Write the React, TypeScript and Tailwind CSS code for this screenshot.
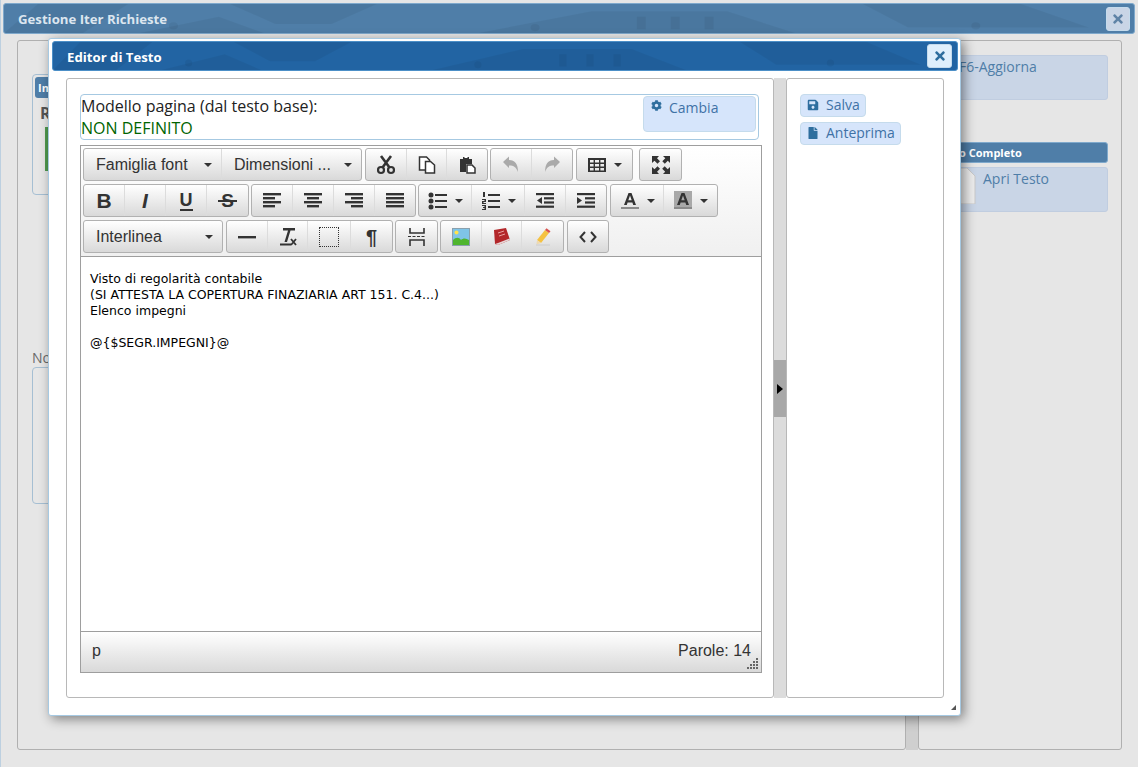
import type { ReactNode } from 'react';
import { FaCog, FaFile, FaSave, FaTimes } from 'react-icons/fa';

const sans = 'font-["Open_Sans",sans-serif]';

// texture of the jQuery-UI style title bars
function HeaderTexture() {
  return (
    <svg className="absolute inset-0 w-full h-full pointer-events-none" preserveAspectRatio="none" viewBox="0 0 1000 32">
      <g fill="#000" fillOpacity="0.05">
        <polygon points="30,0 110,0 70,32 0,32" />
        <polygon points="200,0 330,0 290,22 240,22" />
        <polygon points="420,32 520,8 640,8 700,32" />
        <polygon points="760,0 900,0 960,26 800,26" />
        <polygon points="120,32 190,14 230,32" />
        <rect x="560" y="14" width="8" height="14" />
        <rect x="590" y="14" width="8" height="14" />
        <rect x="620" y="14" width="8" height="14" />
        <circle cx="150" cy="24" r="4" />
        <circle cx="470" cy="26" r="4" />
        <circle cx="860" cy="24" r="4" />
      </g>
    </svg>
  );
}

function CloseButton({ className, color }: { className: string; color: string }) {
  return (
    <button className={`flex items-center justify-center rounded-[3px] border border-[#c5dbec] ${className}`}>
      <FaTimes size={14} color={color} />
    </button>
  );
}

// dropdown listbox of the toolbar
function ListBox({ label, width, last }: { label: string; width: string; last?: boolean }) {
  return (
    <div className={`flex items-center justify-between pl-3 pr-[9px] h-full ${width} ${last ? '' : 'border-r border-[#dcdcdc]'}`}>
      <span className="text-[16px] text-[#333] leading-none whitespace-nowrap">{label}</span>
      <Caret />
    </div>
  );
}

function Caret() {
  return <span className="inline-block w-0 h-0 border-x-[4px] border-x-transparent border-t-[4px] border-t-[#333]" />;
}

function Group({ children, className = '' }: { children: ReactNode; className?: string }) {
  return (
    <div className={`flex h-[33px] rounded-[3px] border border-[#b1b1b1] bg-gradient-to-b from-white to-[#d9d9d9] overflow-hidden ${className}`}>
      {children}
    </div>
  );
}

function Btn({ children, width = 'w-[41px]', last }: { children: ReactNode; width?: string; last?: boolean }) {
  return (
    <div className={`flex items-center justify-center gap-[7px] h-full ${width} ${last ? '' : 'border-r border-[#dcdcdc]'}`}>
      {children}
    </div>
  );
}

function Icon({ children }: { children: ReactNode }) {
  return (
    <svg width="20" height="20" viewBox="0 0 20 20" fill="#333">
      {children}
    </svg>
  );
}

function Lines({ rows }: { rows: [number, number][] }) {
  return (
    <Icon>
      {rows.map(([x, w], i) => (
        <rect key={i} x={x} y={2 + i * 4} width={w} height="2.4" />
      ))}
    </Icon>
  );
}

function Indent({ out }: { out?: boolean }) {
  return (
    <Icon>
      <rect x="1" y="2" width="18" height="2.2" />
      <rect x="9" y="6.2" width="10" height="2.2" />
      <rect x="9" y="10.4" width="10" height="2.2" />
      <rect x="1" y="14.6" width="18" height="2.2" />
      <path d={out ? 'M7 6 2 9.4 7 13Z' : 'M1 6 6 9.4 1 13Z'} />
    </Icon>
  );
}

const letterA = 'M8.5 2h3L16 14h-2.8l-.8-2.5H7.6L6.8 14H4zM8.3 9.3h3.4L10 4.5z';

function Toolbar() {
  return (
    <div className="flex flex-col gap-[3px] h-[111px] pl-[2px] pt-[2px] bg-gradient-to-b from-white to-[#f0f0f0] border-b border-[#9e9e9e] font-['Liberation_Sans',sans-serif]">
      <div className="flex gap-[2px]">
        <Group>
          <ListBox label="Famiglia font" width="w-[138px]" />
          <ListBox label="Dimensioni ..." width="w-[139px]" last />
        </Group>
        <Group className="ml-[1px]">
          <Btn width="w-[41px]">
            <Icon>
              <circle cx="5" cy="15" r="3" fill="none" stroke="#333" strokeWidth="2.2" />
              <circle cx="15" cy="15" r="3" fill="none" stroke="#333" strokeWidth="2.2" />
              <path d="M6.5 12.5 15 1M13.5 12.5 5 1" stroke="#333" strokeWidth="2.6" />
            </Icon>
          </Btn>
          <Btn width="w-[40px]">
            <Icon>
              <path d="M2.5 2h7l3 3v10h-10z" fill="#fff" stroke="#333" strokeWidth="1.5" />
              <path d="M8.5 6.5h5l4 3.5v8h-9z" fill="#fff" stroke="#333" strokeWidth="1.5" />
            </Icon>
          </Btn>
          <Btn width="w-[40px]" last>
            <Icon>
              <path d="M3 4h3V2h6v2h3v5H9v8H3z" />
              <path d="M10 10h5l3 3v5h-8z" fill="#fff" stroke="#333" strokeWidth="1.5" />
              <rect x="7.5" y="1" width="3" height="2" fill="#fff" />
            </Icon>
          </Btn>
        </Group>
        <Group>
          <Btn width="w-[41px]">
            <Icon>
              <path d="M2 7 8 1.5V5c6 0 9 4 9 12-2-5-4-6.5-9-6.5V13z" fill="#aaa" />
            </Icon>
          </Btn>
          <Btn width="w-[40px]" last>
            <Icon>
              <path d="M18 7 12 1.5V5c-6 0-9 4-9 12 2-5 4-6.5 9-6.5V13z" fill="#aaa" />
            </Icon>
          </Btn>
        </Group>
        <Group className="ml-[1px]">
          <Btn width="w-[55px]" last>
            <Icon>
              <path d="M1 3h18v14H1zM3 5v2.5h3.6V5zm5 0v2.5h4V5zm5.4 0v2.5H17V5zM3 9v2.5h3.6V9zm5 0v2.5h4V9zm5.4 0v2.5H17V9zM3 13v2.5h3.6V13zm5 0v2.5h4V13zm5.4 0v2.5H17V13z" fillRule="evenodd" />
            </Icon>
            <Caret />
          </Btn>
        </Group>
        <Group className="ml-[4px]">
          <Btn width="w-[41px]" last>
            <Icon>
              <path d="M1 1h7L6 3.2l3 3-2.5 2.5-3-3L1 8zM19 1v7l-2.2-2.2-3 3-2.5-2.5 3-3L12 1zM1 19v-7l2.5 2.2 3-3 2.5 2.5-3 3L8 19zM19 19h-7l2.2-2.3-3-3 2.5-2.5 3 3L19 12z" />
            </Icon>
          </Btn>
        </Group>
      </div>
      <div className="flex gap-[2px]">
        <Group>
          <Btn>
            <span className="font-bold text-[21px] text-[#333] leading-none">B</span>
          </Btn>
          <Btn>
            <span className="font-bold italic text-[21px] text-[#333] leading-none">I</span>
          </Btn>
          <Btn>
            <span className="font-bold text-[18px] text-[#333] leading-[18px] border-b-2 border-[#333]">U</span>
          </Btn>
          <Btn last>
            <span className="relative font-bold text-[19px] text-[#333] leading-none px-[1px]">
              S
              <span className="absolute -left-[2px] -right-[2px] top-[9px] h-[2px] bg-[#333]" />
            </span>
          </Btn>
        </Group>
        <Group>
          <Btn>
            <Lines rows={[[1, 18], [1, 12], [1, 18], [1, 12]]} />
          </Btn>
          <Btn>
            <Lines rows={[[1, 18], [4, 12], [1, 18], [4, 12]]} />
          </Btn>
          <Btn>
            <Lines rows={[[1, 18], [7, 12], [1, 18], [7, 12]]} />
          </Btn>
          <Btn width="w-[40px]" last>
            <Lines rows={[[1, 18], [1, 18], [1, 18], [1, 18]]} />
          </Btn>
        </Group>
        <Group>
          <Btn width="w-[53px]">
            <Icon>
              <circle cx="3" cy="4" r="2.5" />
              <circle cx="3" cy="10" r="2.5" />
              <circle cx="3" cy="16" r="2.5" />
              <rect x="7" y="3" width="12" height="2" />
              <rect x="7" y="9" width="12" height="2" />
              <rect x="7" y="15" width="12" height="2" />
            </Icon>
            <Caret />
          </Btn>
          <Btn width="w-[53px]">
            <Icon>
              <rect x="7" y="3" width="12" height="2" />
              <rect x="7" y="9" width="12" height="2" />
              <rect x="7" y="15" width="12" height="2" />
              <rect x="2" y="1" width="2" height="5" />
              <path d="M1 8h4v3H2.5v1H5v1H1v-3h2.5V9H1zM1 14h4v5H1v-1h2.5v-1H2v-1h1.5v-1H1z" />
            </Icon>
            <Caret />
          </Btn>
          <Btn>
            <Indent out />
          </Btn>
          <Btn width="w-[40px]" last>
            <Indent />
          </Btn>
        </Group>
        <Group className="ml-[1px]">
          <Btn width="w-[53px]">
            <Icon>
              <path d={letterA} />
              <rect x="1" y="16" width="18" height="2" fill="#8a8a8a" />
            </Icon>
            <Caret />
          </Btn>
          <Btn width="w-[53px]" last>
            <Icon>
              <rect x="1" y="0" width="18" height="18" fill="#a8a8a8" />
              <path d={letterA} />
              <rect x="1" y="16" width="18" height="2" fill="#8a8a8a" />
            </Icon>
            <Caret />
          </Btn>
        </Group>
      </div>
      <div className="flex gap-[2px]">
        <Group>
          <ListBox label="Interlinea" width="w-[138px]" last />
        </Group>
        <Group className="ml-[1px]">
          <Btn>
            <Icon>
              <rect x="1" y="9" width="18" height="2.4" />
            </Icon>
          </Btn>
          <Btn width="w-[40px]">
            <Icon>
              <path d="M5 1h12v2.4h-4.5L9 15H6.5L10 3.4H5z" />
              <rect x="2" y="16.5" width="11" height="2" />
              <path d="M13 12l5 6M18 12l-5 6" stroke="#333" strokeWidth="1.8" />
            </Icon>
          </Btn>
          <Btn width="w-[43px]">
            <span className="block w-5 h-5 border border-dotted border-[#333]" />
          </Btn>
          <Btn last>
            <span className="font-bold text-[20px] text-[#333] leading-none">¶</span>
          </Btn>
        </Group>
        <Group>
          <Btn last>
            <Icon>
              <path d="M3 1v5h14V1M3 19v-6h14v6" fill="none" stroke="#333" strokeWidth="1.6" />
              <path d="M1 9.5h18" stroke="#333" strokeWidth="1.2" strokeDasharray="3 1.5" />
            </Icon>
          </Btn>
        </Group>
        <Group>
          <Btn>
            <svg width="18" height="18" viewBox="0 0 18 18">
              <rect width="18" height="18" fill="#7fc4e8" />
              <rect x="0.5" y="0.5" width="17" height="17" fill="none" stroke="#8aa0ad" />
              <circle cx="4.5" cy="4.5" r="2" fill="#ffe34d" />
              <path d="M1 17v-5c3-3 6-3 8 0 2-2 5-2 8 0v5z" fill="#4fb52e" />
            </svg>
          </Btn>
          <Btn width="w-[40px]">
            <svg width="18" height="18" viewBox="0 0 18 18">
              <path d="M1 2 13 0l4 12-12 5-3-1z" fill="#b3272a" />
              <path d="M2 16 5 17l12-5-.5-1.5L5 15z" fill="#e6d5d5" />
              <path d="M5 5l6-2" stroke="#e8a0a0" strokeWidth="1" />
              <path d="M6 8l6-2" stroke="#e8a0a0" strokeWidth="1" />
            </svg>
          </Btn>
          <Btn last>
            <svg width="18" height="18" viewBox="0 0 18 18">
              <path d="M11 2l4 3-8 10-4-3z" fill="#f5c242" />
              <path d="M11 2l1.5-1.8 4 3L15 5z" fill="#d9534f" />
              <path d="M3 12l4 3-4.5 1.5z" fill="#eed9b0" />
              <rect x="2" y="16.5" width="14" height="1" fill="#ccc" />
            </svg>
          </Btn>
        </Group>
        <Group className="ml-[1px]">
          <Btn width="w-[40px]" last>
            <Icon>
              <path d="M7 5 2.5 10 7 15" fill="none" stroke="#333" strokeWidth="2" />
              <path d="M13 5 17.5 10 13 15" fill="none" stroke="#333" strokeWidth="2" />
            </Icon>
          </Btn>
        </Group>
      </div>
    </div>
  );
}

function Editor() {
  return (
    <div className="flex flex-col ml-[13px] w-[682px] border border-[#9e9e9e] h-[528px] shrink-0">
      <Toolbar />
      <div className="flex-1 bg-white px-[9px] pt-[14px] font-['DejaVu_Sans',sans-serif] text-[12.5px] leading-4 text-black">
        <p>Visto di regolarità contabile</p>
        <p>(SI ATTESTA LA COPERTURA FINAZIARIA ART 151. C.4...)</p>
        <p>Elenco impegni</p>
        <p>&nbsp;</p>
        <p>@&#123;$SEGR.IMPEGNI&#125;@</p>
      </div>
      <div className="relative flex items-center justify-between h-[41px] border-t border-[#9e9e9e] bg-gradient-to-b from-white to-[#d9d9d9] pl-[11px] pr-[10px] pb-[2px] font-['Liberation_Sans',sans-serif] text-[16px] text-[#333]">
        <span>p</span>
        <span>Parole: 14</span>
        {/* resize grip */}
        <svg className="absolute right-[3px] bottom-[2px]" width="12" height="12" viewBox="0 0 12 12" fill="#666">
          <path d="M10 0h2v2h-2zM7 3h2v2H7zM10 3h2v2h-2zM4 6h2v2H4zM7 6h2v2H7zM10 6h2v2h-2zM1 9h2v2H1zM4 9h2v2H4zM7 9h2v2H7zM10 9h2v2h-2z" />
        </svg>
      </div>
    </div>
  );
}

function EditorModal() {
  return (
    <div className={`absolute left-[47px] top-[38px] flex flex-col w-[913px] h-[678px] bg-white border border-[#a6c9e2] rounded-[3px] pt-[2px] pl-[3px] pr-[2px] pb-[3px] shadow-[3px_3px_12px_rgba(0,0,0,0.45)] ${sans}`}>
      <div className="relative flex items-center justify-between h-[30px] shrink-0 rounded-[3px] bg-[#2264a3] border border-[#4c8fc7] pl-[14px] pr-[5px]">
        <HeaderTexture />
        <span className="relative pt-[3px] text-[13.2px] font-bold text-white">Editor di Testo</span>
        <CloseButton className="relative w-[25px] h-[24px] bg-[#dfeffc]" color="#2e6e9e" />
      </div>
      <div className="flex flex-1 mt-[7px] px-[14px] pb-[14px]">
        <div className="flex flex-col w-[708px] shrink-0 pt-[15px] border border-[#b8b8b8] rounded-[3px]">
          <div className="flex justify-between h-[46px] w-[679px] ml-[13px] mb-[5px] pr-[2px] pt-[1px] border border-[#a6c9e2] rounded-[4px] shrink-0">
            <div className="-mt-[1px] text-[16px] leading-[22px]">
              <p className="text-[#222]">Modello pagina (dal testo base):</p>
              <p className="text-[#006400]">NON DEFINITO</p>
            </div>
            <div className="flex gap-[7px] w-[113px] h-[36px] pl-[7px] rounded-[4px] border border-[#c5dbec] bg-[#d6e5fb] text-[14px] leading-[21px] text-[#3f72a6]">
              <FaCog size={11} color="#2e6e9e" className="mt-[3px]" />
              <span>Cambia</span>
            </div>
          </div>
          <Editor />
        </div>
        <div className="relative w-3 shrink-0 bg-[#dcdcdc]">
          <div className="absolute inset-x-0 top-[282px] h-[57px] bg-[#a8a8a8] flex items-center justify-center">
            <span className="w-0 h-0 border-y-[5px] border-y-transparent border-l-[6px] border-l-black" />
          </div>
        </div>
        <div className="flex flex-col items-start gap-[5px] w-[158px] shrink-0 pt-[15px] pl-[13px] border border-[#b8b8b8] rounded-[3px]">
          <div className="flex items-center gap-[7px] h-[23px] pl-[6px] pr-[5px] pb-[2px] rounded-[4px] border border-[#c5dbec] bg-[#d6e5fb] text-[14px] text-[#3f72a6]">
            <FaSave size={12} color="#2e6e9e" />
            Salva
          </div>
          <div className="flex items-center gap-[7px] h-[23px] pl-[6px] pr-[5px] pb-[2px] rounded-[4px] border border-[#c5dbec] bg-[#d6e5fb] text-[14px] text-[#3f72a6]">
            <FaFile size={12} color="#2e6e9e" />
            Anteprima
          </div>
        </div>
      </div>
      {/* modal resize grip */}
      <span className="absolute right-[4px] bottom-[5px] w-0 h-0 border-b-[5px] border-b-[#555] border-l-[5px] border-l-transparent" />
    </div>
  );
}

export default function App() {
  return (
    <div className={`relative w-[1138px] h-[767px] overflow-hidden bg-[#e6e6e6] border-l border-[#bdd0e0] ${sans}`}>
      <div className="flex flex-col h-full pl-[2px] pr-[3px] pt-[3px]">
        <div className="relative flex items-center justify-between h-[31px] shrink-0 rounded-[3px] bg-[#4f7ea8] border border-[#7fa9cc] pl-[14px] pr-[4px]">
          <HeaderTexture />
          <span className="relative pt-[3px] text-[13.2px] font-bold text-[#dce6ef]">Gestione Iter Richieste</span>
          <CloseButton className="relative w-[24px] h-[24px] bg-[#c9d5e6]" color="#5f83a6" />
        </div>
        <div className="flex flex-1 mt-[6px] pl-[14px] pr-[12px] pb-[17px]">
          {/* left page panel */}
          <div className="relative w-[889px] shrink-0 border border-[#b0b0b0] rounded-[3px] pl-[14px] pt-[33px]">
            <div className="w-[30px] h-[121px] border border-[#a6bfd3] rounded-[4px] pl-[2px] pt-[2px]">
              <div className="w-[25px] h-[21px] rounded-[3px] bg-[#4f7ea8] text-white text-[11px] leading-[21px] font-bold pl-[3px]">Im</div>
              <p className="mt-[3px] pl-[5px] text-[16px] font-bold text-[#555]">R</p>
              <div className="mt-[2px] ml-[10px] w-[6px] h-[44px] bg-[#4f9a4f]" />
            </div>
            <p className="mt-[153px] text-[14px] leading-[19px] text-[#6a6a6a]">No</p>
            <div className="w-[30px] h-[137px] border border-[#a6bfd3] rounded-[4px]" />
          </div>
          <div className="w-3 shrink-0 bg-[#cfcfcf]" />
          {/* right page panel */}
          <div className="flex flex-col w-[204px] shrink-0 border border-[#b0b0b0] rounded-[3px] pt-[14px] pl-[13px] pr-[13px]">
            <div className="h-[45px] rounded-[3px] border border-[#c0cde0] bg-[#c9d5e6] pl-[26px] text-[14px] leading-[21px] text-[#4f7ea8]">F6-Aggiorna</div>
            <div className="mt-[42px] h-[21px] rounded-[3px] border border-[#7fa9cc] bg-[#4f7ea8] pl-[3px] text-[11px] font-bold leading-[19px] text-white">Testo Completo</div>
            <div className="flex mt-[4px] h-[45px] rounded-[3px] border border-[#c0cde0] bg-[#c9d5e6] text-[14px] text-[#4f7ea8]">
              <svg width="43" height="36" viewBox="0 0 43 36" className="shrink-0">
                <path d="M6 0h28l8 8v28H6z" fill="#ececec" stroke="#c9c9c9" />
              </svg>
              <span className="ml-[7px] leading-[22px]">Apri Testo</span>
            </div>
          </div>
        </div>
      </div>
      <EditorModal />
    </div>
  );
}
